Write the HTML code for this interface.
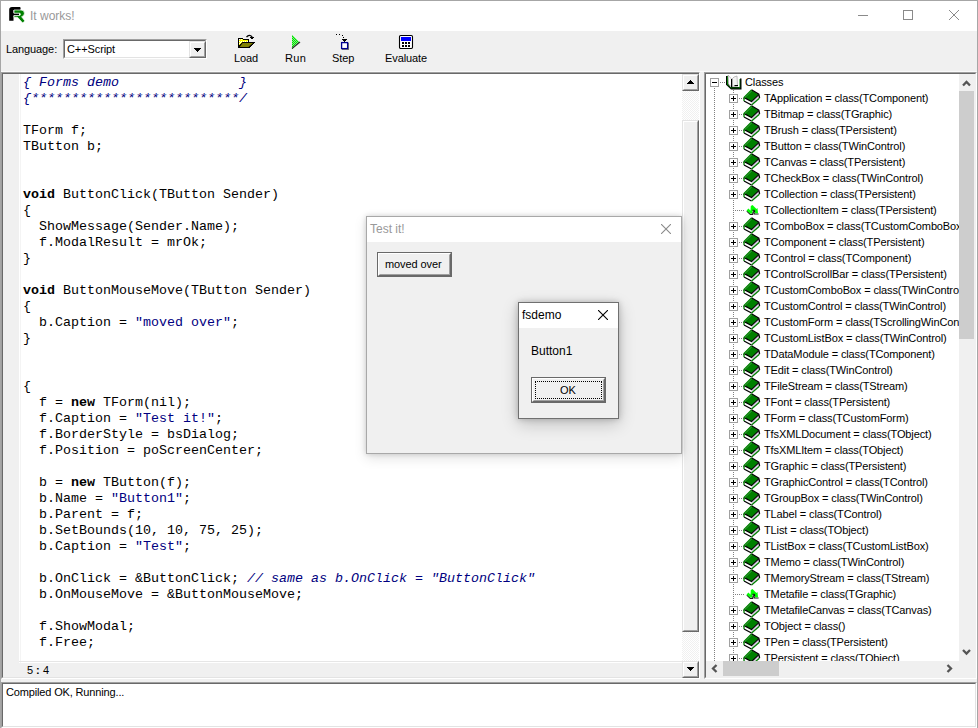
<!DOCTYPE html>
<html><head><meta charset="utf-8">
<style>
*{box-sizing:border-box;margin:0;padding:0}
html,body{width:978px;height:728px;overflow:hidden;background:#f0f0f0}
body{position:relative;font-family:"Liberation Sans",sans-serif;font-size:11px;color:#000}
.a{position:absolute}
.ui{font-family:"Liberation Sans",sans-serif;font-size:11px;white-space:pre;letter-spacing:-0.1px}
#win{left:0;top:0;width:978px;height:728px;border-left:1px solid #a6a6a6;border-top:1px solid #a6a6a6;border-right:1px solid #a6a6a6;background:#f0f0f0}
#title{left:1px;top:1px;width:976px;height:30px;background:#fff}
#code{font-family:"Liberation Mono",monospace;font-size:13.33px;line-height:16px;white-space:pre;color:#000}
#code b{font-weight:bold}
#code i{font-style:italic;color:#000080}
#code s{text-decoration:none;color:#000080}
.sb-btn{background:#f0f0f0;border-style:solid;border-width:1px;border-color:#e3e3e3 #696969 #696969 #e3e3e3}
.sb-btn>div{position:absolute;left:0;top:0;right:0;bottom:0;border-style:solid;border-width:1px;border-color:#fff #a0a0a0 #a0a0a0 #fff}
.dither{background:repeating-conic-gradient(#fff 0 25%,#f0f0f0 0 50%) 0 0/2px 2px}
.row{position:absolute;left:764px;height:16px;line-height:16px;font-size:11px;white-space:pre;letter-spacing:-0.12px}
.pb{position:absolute;left:729px;width:9px;height:9px;border:1px solid #a0a0a0;background:#fff}
.pb:before{content:"";position:absolute;left:1px;top:3px;width:5px;height:1px;background:#000}
.pb.plus:after{content:"";position:absolute;left:3px;top:1px;width:1px;height:5px;background:#000}
.hd{position:absolute;height:1px;background:repeating-linear-gradient(to right,#808080 0 1px,transparent 1px 2px)}
.vd{position:absolute;width:1px;background:repeating-linear-gradient(to bottom,#808080 0 1px,transparent 1px 2px)}
.bk{position:absolute;left:743px;width:18px;height:18px}
</style></head><body>
<svg width="0" height="0" style="position:absolute">
<defs>
<symbol id="book" viewBox="0 0 20 18">
 <polygon points="1,8.5 8.5,12.5 15.5,5.5 16.5,9 8.5,16 1,12" fill="#fff"/>
 <polygon points="8.5,12.5 15.5,5.5 16.5,9 8.5,16" fill="#d8d0e0"/>
 <polygon points="8.5,1 15.5,5.5 8.5,12.5 1,8.5" fill="#008000"/>
 <path d="M1 12L8.5 16" stroke="#000" stroke-width="1.3" fill="none"/>
 <path d="M1.2 8.6L8.5 12.6L15.8 5.6" stroke="#000" stroke-width="1.2" fill="none"/>
 <path d="M8.5 0.8L15.8 5.2L16.6 9" stroke="#000" stroke-width="1.3" fill="none"/>
 <path d="M1 12V8.5L8.5 1" stroke="#008000" stroke-width="1.3" fill="none"/>
 <path d="M8.6 16L16.4 9.2" stroke="#008000" stroke-width="1.2" fill="none"/>
 <path d="M2.2 8.4L8.4 2.2" stroke="#9ac09a" stroke-width="0.8" stroke-dasharray="0.8 0.7" fill="none"/>
</symbol>
<symbol id="openbook" viewBox="0 0 24 20">
 <path d="M4 4H6.5V12L8.5 15H18V6.5H19.5V17.5H9L4 12.8Z" fill="#000"/>
 <path d="M5 4.2H6V12.3L8.3 15.6H17.5V7H18.2V16.2H8.6L5 12.5Z" fill="#008000"/>
 <polygon points="6,3 9.5,7 9.5,15 6.5,12" fill="#fff" stroke="#999" stroke-width="0.6"/>
 <polygon points="10,7 12,5 15,4 15.5,13.5 10,14.5" fill="#f4f4f4" stroke="#999" stroke-width="0.6"/>
 <rect x="9" y="7" width="1.2" height="8" fill="#000"/>
 <rect x="12.5" y="13" width="3.5" height="1.2" fill="#000"/>
</symbol>
<symbol id="leaf" viewBox="0 0 16 16">
 <path d="M2.8 9.2L6.3 12.4H8.6L9 10L10.2 9.6V12H14.6" stroke="#000" stroke-width="1.1" fill="none" opacity="0.9"/>
 <polygon points="2.5,8.5 4.5,6.5 6.5,8.8 6.8,4 8.5,3 12.5,7 13.5,6 14,11.2 10.8,11.2 10.5,8.5 8.5,8.5 8.2,11.5 6,11.5" fill="#00ff00"/>
 <path d="M8.4 8.3H10.6V10" stroke="#000" stroke-width="1" fill="none"/>
</symbol>
</defs></svg>
<div id="win" class="a"></div>
<div id="title" class="a"></div>
<!-- app icon -->
<svg class="a" style="left:6px;top:4px" width="22" height="22" viewBox="0 0 22 22">
 <path d="M3.2 16.7V5.8Q3.2 3 6 3H14Q14.6 3 14.6 4.5Q14.6 6 14 6H7.5V9.2H13V11.6H7.5V16.7Z" fill="#000"/>
 <path d="M8 6H15Q18.4 6 18.4 9.3Q18.4 12.2 15.6 12.7L18.6 16.6Q18.6 18.7 16.4 18.7L11.4 13.2H8V11.5H13.4Q14.4 11.5 14.4 10.3Q14.4 9.2 13.4 9.2H8Z" fill="#008000" stroke="#fff" stroke-width="0.7"/>
</svg>
<div class="a ui" style="left:30px;top:9px;font-size:12px;color:#999;letter-spacing:0">It works!</div>
<!-- caption buttons -->
<div class="a" style="left:858px;top:15px;width:10px;height:1px;background:#8a8a8a"></div>
<div class="a" style="left:903px;top:10px;width:10px;height:10px;border:1px solid #8a8a8a"></div>
<svg class="a" style="left:949px;top:10px" width="10" height="10"><path d="M0 0L10 10M10 0L0 10" stroke="#8a8a8a" stroke-width="1"/></svg>

<!-- toolbar -->
<div class="a" style="left:1px;top:71px;width:976px;height:1px;background:#fafafa"></div>
<div class="a ui" style="left:6px;top:43px">Language:</div>
<div class="a" style="left:63px;top:39px;width:144px;height:20px;border-style:solid;border-width:1px;border-color:#a0a0a0 #fff #fff #a0a0a0"></div>
<div class="a" style="left:64px;top:40px;width:142px;height:18px;border-style:solid;border-width:1px;border-color:#696969 #e3e3e3 #e3e3e3 #696969;background:#fff"></div>
<div class="a ui" style="left:67px;top:43px">C++Script</div>
<div class="a sb-btn" style="left:189px;top:41px;width:17px;height:17px"><div></div></div>
<svg class="a" style="left:194px;top:48px" width="8" height="5" shape-rendering="crispEdges"><path d="M0 0H7V1H6V2H5V3H4V4H3V3H2V2H1V1H0Z" fill="#000"/></svg>

<!-- Load icon -->
<svg class="a" style="left:238px;top:34px" width="18" height="16" shape-rendering="crispEdges">
 <defs><pattern id="yd" width="2" height="2" patternUnits="userSpaceOnUse"><rect width="2" height="2" fill="#ffff00"/><rect width="1" height="1" fill="#fff"/><rect x="1" y="1" width="1" height="1" fill="#fff"/></pattern></defs>
 <path d="M0 4H4L5 5H11V8H17L11 14H0Z" fill="#000"/>
 <path d="M1 5H4L5 6H10V8H4L1 12Z" fill="url(#yd)"/>
 <rect x="1" y="6" width="9" height="1" fill="#ffff00"/>
 <path d="M4.6 9H15L10.4 13H1.6Z" fill="#808000" shape-rendering="auto"/>
 <path d="M8.5 3.2Q11.2 -0.2 14.2 3" stroke="#000" stroke-width="1.3" fill="none" shape-rendering="auto"/>
 <path d="M12 3H16V4H15V5H13V4H12Z" fill="#000"/>
</svg>
<div class="a ui" style="left:234px;top:52px">Load</div>
<!-- Run icon -->
<svg class="a" style="left:291px;top:35px" width="10" height="15" shape-rendering="crispEdges">
 <defs><pattern id="dg" width="2" height="2" patternUnits="userSpaceOnUse"><rect width="2" height="2" fill="#80f080"/><rect width="1" height="1" fill="#00e000"/><rect x="1" y="1" width="1" height="1" fill="#00e000"/></pattern></defs>
 <path d="M1 0L9 7L1 14Z" fill="url(#dg)"/>
 <path d="M1 13.5L9 7" stroke="#333" stroke-width="1.2" shape-rendering="auto"/>
</svg>
<div class="a ui" style="left:285px;top:52px;letter-spacing:0.4px">Run</div>
<!-- Step icon -->
<svg class="a" style="left:335px;top:33px" width="16" height="17" shape-rendering="crispEdges">
 <rect x="1" y="1" width="1" height="1" fill="#000"/><rect x="4" y="1" width="1" height="1" fill="#000"/><rect x="7" y="2" width="1" height="1" fill="#000"/><rect x="8" y="4" width="1" height="1" fill="#000"/>
 <path d="M7 6H12V7H11V8H10V9H9V8H8V7H7Z" fill="#000"/>
 <rect x="7" y="10" width="7" height="7" fill="#808070"/>
 <rect x="6.6" y="9.6" width="6" height="6" fill="#fff" stroke="#000090" stroke-width="1.3" shape-rendering="auto"/>
</svg>
<div class="a ui" style="left:332px;top:52px">Step</div>
<!-- Evaluate icon -->
<svg class="a" style="left:398px;top:34px" width="16" height="16" shape-rendering="crispEdges">
 <rect x="1.5" y="1.5" width="13" height="13" rx="1.2" fill="#fff" stroke="#000" stroke-width="1.1" shape-rendering="auto"/>
 <rect x="3" y="3" width="10" height="4" fill="#0000ff"/>
 <rect x="4" y="8" width="2" height="2" fill="#000"/><rect x="7" y="8" width="2" height="2" fill="#000"/><rect x="10" y="8" width="2" height="2" fill="#000"/>
 <rect x="4" y="11" width="2" height="2" fill="#000"/><rect x="7" y="11" width="2" height="2" fill="#000"/><rect x="10" y="11" width="2" height="2" fill="#000"/>
</svg>
<div class="a ui" style="left:385px;top:52px">Evaluate</div>

<!-- EDITOR FRAME -->
<div class="a" style="left:1px;top:72px;width:699px;height:607px;border-style:solid;border-width:1px;border-color:#a0a0a0 #fff #fff #a0a0a0"></div>
<div class="a" style="left:2px;top:73px;width:697px;height:605px;border-style:solid;border-width:1px 0 1px 1px;border-color:#696969 #e3e3e3 #e3e3e3 #696969;background:#f0f0f0"></div>
<div class="a" style="left:19px;top:74px;width:663px;height:589px;background:#fff;box-shadow:inset 1px 0 0 #fff,inset 2px 0 0 #f4f4f4"></div>
<div class="a" style="left:19px;top:661px;width:663px;height:1px;background:#e6e6e6"></div>
<div id="code" class="a" style="left:23px;top:75px"><i>{ Forms demo               }</i>
<i>{**************************/</i>

TForm f;
TButton b;


<b>void</b> ButtonClick(TButton Sender)
{
  ShowMessage(Sender.Name);
  f.ModalResult = mrOk;
}

<b>void</b> ButtonMouseMove(TButton Sender)
{
  b.Caption = <s>"moved over"</s>;
}


{
  f = <b>new</b> TForm(nil);
  f.Caption = <s>"Test it!"</s>;
  f.BorderStyle = bsDialog;
  f.Position = poScreenCenter;

  b = <b>new</b> TButton(f);
  b.Name = <s>"Button1"</s>;
  b.Parent = f;
  b.SetBounds(10, 10, 75, 25);
  b.Caption = <s>"Test"</s>;

  b.OnClick = &amp;ButtonClick; <i>// same as b.OnClick = "ButtonClick"</i>
  b.OnMouseMove = &amp;ButtonMouseMove;

  f.ShowModal;
  f.Free;</div>
<div class="a ui" style="left:27px;top:664px">5</div><div class="a ui" style="left:36px;top:664px;font-weight:bold">:</div><div class="a ui" style="left:43px;top:664px">4</div>
<!-- editor vscroll -->
<div class="a dither" style="left:682px;top:74px;width:17px;height:604px"></div>
<div class="a sb-btn" style="left:682px;top:74px;width:17px;height:17px"><div></div></div>
<svg class="a" style="left:687px;top:80px" width="8" height="5" shape-rendering="crispEdges"><path d="M3 0H4V1H5V2H6V3H7V4H0V3H1V2H2V1H3Z" fill="#000"/></svg>
<div class="a sb-btn" style="left:682px;top:120px;width:17px;height:512px"><div></div></div>
<div class="a sb-btn" style="left:682px;top:661px;width:17px;height:17px"><div></div></div>
<svg class="a" style="left:687px;top:667px" width="8" height="5" shape-rendering="crispEdges"><path d="M0 0H7V1H6V2H5V3H4V4H3V3H2V2H1V1H0Z" fill="#000"/></svg>

<!-- TREE FRAME -->
<div class="a" style="left:704px;top:72px;width:273px;height:607px;border-style:solid;border-width:1px;border-color:#a0a0a0 #fff #fff #a0a0a0"></div>
<div class="a" style="left:705px;top:73px;width:271px;height:605px;border-style:solid;border-width:1px;border-color:#696969 #e3e3e3 #e3e3e3 #696969;background:#fff;overflow:hidden" id="tree"></div>
<div class="a" style="left:706px;top:74px;width:253px;height:587px;overflow:hidden;background:#fff">
<div class="pb" style="left:4px;top:4px"></div>
<div class="hd" style="left:14px;top:8px;width:6px"></div>
<svg class="a" style="left:16px;top:-2px" width="24" height="20"><use href="#openbook"/></svg>
<div class="row" style="left:39px;top:0px">Classes</div>
<div class="vd" style="left:8px;top:14px;height:580px"></div>
<div class="vd" style="left:27px;top:16px;height:580px"></div>
<div class="pb plus" style="left:23px;top:20px"></div>
<div class="hd" style="left:33px;top:24px;width:5px"></div>
<svg class="a" style="left:37px;top:15px" width="20" height="18"><use href="#book"/></svg>
<div class="row" style="left:58px;top:16px">TApplication = class(TComponent)</div>
<div class="pb plus" style="left:23px;top:36px"></div>
<div class="hd" style="left:33px;top:40px;width:5px"></div>
<svg class="a" style="left:37px;top:31px" width="20" height="18"><use href="#book"/></svg>
<div class="row" style="left:58px;top:32px">TBitmap = class(TGraphic)</div>
<div class="pb plus" style="left:23px;top:52px"></div>
<div class="hd" style="left:33px;top:56px;width:5px"></div>
<svg class="a" style="left:37px;top:47px" width="20" height="18"><use href="#book"/></svg>
<div class="row" style="left:58px;top:48px">TBrush = class(TPersistent)</div>
<div class="pb plus" style="left:23px;top:68px"></div>
<div class="hd" style="left:33px;top:72px;width:5px"></div>
<svg class="a" style="left:37px;top:63px" width="20" height="18"><use href="#book"/></svg>
<div class="row" style="left:58px;top:64px">TButton = class(TWinControl)</div>
<div class="pb plus" style="left:23px;top:84px"></div>
<div class="hd" style="left:33px;top:88px;width:5px"></div>
<svg class="a" style="left:37px;top:79px" width="20" height="18"><use href="#book"/></svg>
<div class="row" style="left:58px;top:80px">TCanvas = class(TPersistent)</div>
<div class="pb plus" style="left:23px;top:100px"></div>
<div class="hd" style="left:33px;top:104px;width:5px"></div>
<svg class="a" style="left:37px;top:95px" width="20" height="18"><use href="#book"/></svg>
<div class="row" style="left:58px;top:96px">TCheckBox = class(TWinControl)</div>
<div class="pb plus" style="left:23px;top:116px"></div>
<div class="hd" style="left:33px;top:120px;width:5px"></div>
<svg class="a" style="left:37px;top:111px" width="20" height="18"><use href="#book"/></svg>
<div class="row" style="left:58px;top:112px">TCollection = class(TPersistent)</div>
<div class="hd" style="left:29px;top:136px;width:10px"></div>
<svg class="a" style="left:38px;top:128px" width="16" height="16"><use href="#leaf"/></svg>
<div class="row" style="left:58px;top:128px">TCollectionItem = class(TPersistent)</div>
<div class="pb plus" style="left:23px;top:148px"></div>
<div class="hd" style="left:33px;top:152px;width:5px"></div>
<svg class="a" style="left:37px;top:143px" width="20" height="18"><use href="#book"/></svg>
<div class="row" style="left:58px;top:144px">TComboBox = class(TCustomComboBox)</div>
<div class="pb plus" style="left:23px;top:164px"></div>
<div class="hd" style="left:33px;top:168px;width:5px"></div>
<svg class="a" style="left:37px;top:159px" width="20" height="18"><use href="#book"/></svg>
<div class="row" style="left:58px;top:160px">TComponent = class(TPersistent)</div>
<div class="pb plus" style="left:23px;top:180px"></div>
<div class="hd" style="left:33px;top:184px;width:5px"></div>
<svg class="a" style="left:37px;top:175px" width="20" height="18"><use href="#book"/></svg>
<div class="row" style="left:58px;top:176px">TControl = class(TComponent)</div>
<div class="pb plus" style="left:23px;top:196px"></div>
<div class="hd" style="left:33px;top:200px;width:5px"></div>
<svg class="a" style="left:37px;top:191px" width="20" height="18"><use href="#book"/></svg>
<div class="row" style="left:58px;top:192px">TControlScrollBar = class(TPersistent)</div>
<div class="pb plus" style="left:23px;top:212px"></div>
<div class="hd" style="left:33px;top:216px;width:5px"></div>
<svg class="a" style="left:37px;top:207px" width="20" height="18"><use href="#book"/></svg>
<div class="row" style="left:58px;top:208px">TCustomComboBox = class(TWinControl)</div>
<div class="pb plus" style="left:23px;top:228px"></div>
<div class="hd" style="left:33px;top:232px;width:5px"></div>
<svg class="a" style="left:37px;top:223px" width="20" height="18"><use href="#book"/></svg>
<div class="row" style="left:58px;top:224px">TCustomControl = class(TWinControl)</div>
<div class="pb plus" style="left:23px;top:244px"></div>
<div class="hd" style="left:33px;top:248px;width:5px"></div>
<svg class="a" style="left:37px;top:239px" width="20" height="18"><use href="#book"/></svg>
<div class="row" style="left:58px;top:240px">TCustomForm = class(TScrollingWinControl)</div>
<div class="pb plus" style="left:23px;top:260px"></div>
<div class="hd" style="left:33px;top:264px;width:5px"></div>
<svg class="a" style="left:37px;top:255px" width="20" height="18"><use href="#book"/></svg>
<div class="row" style="left:58px;top:256px">TCustomListBox = class(TWinControl)</div>
<div class="pb plus" style="left:23px;top:276px"></div>
<div class="hd" style="left:33px;top:280px;width:5px"></div>
<svg class="a" style="left:37px;top:271px" width="20" height="18"><use href="#book"/></svg>
<div class="row" style="left:58px;top:272px">TDataModule = class(TComponent)</div>
<div class="pb plus" style="left:23px;top:292px"></div>
<div class="hd" style="left:33px;top:296px;width:5px"></div>
<svg class="a" style="left:37px;top:287px" width="20" height="18"><use href="#book"/></svg>
<div class="row" style="left:58px;top:288px">TEdit = class(TWinControl)</div>
<div class="pb plus" style="left:23px;top:308px"></div>
<div class="hd" style="left:33px;top:312px;width:5px"></div>
<svg class="a" style="left:37px;top:303px" width="20" height="18"><use href="#book"/></svg>
<div class="row" style="left:58px;top:304px">TFileStream = class(TStream)</div>
<div class="pb plus" style="left:23px;top:324px"></div>
<div class="hd" style="left:33px;top:328px;width:5px"></div>
<svg class="a" style="left:37px;top:319px" width="20" height="18"><use href="#book"/></svg>
<div class="row" style="left:58px;top:320px">TFont = class(TPersistent)</div>
<div class="pb plus" style="left:23px;top:340px"></div>
<div class="hd" style="left:33px;top:344px;width:5px"></div>
<svg class="a" style="left:37px;top:335px" width="20" height="18"><use href="#book"/></svg>
<div class="row" style="left:58px;top:336px">TForm = class(TCustomForm)</div>
<div class="pb plus" style="left:23px;top:356px"></div>
<div class="hd" style="left:33px;top:360px;width:5px"></div>
<svg class="a" style="left:37px;top:351px" width="20" height="18"><use href="#book"/></svg>
<div class="row" style="left:58px;top:352px">TfsXMLDocument = class(TObject)</div>
<div class="pb plus" style="left:23px;top:372px"></div>
<div class="hd" style="left:33px;top:376px;width:5px"></div>
<svg class="a" style="left:37px;top:367px" width="20" height="18"><use href="#book"/></svg>
<div class="row" style="left:58px;top:368px">TfsXMLItem = class(TObject)</div>
<div class="pb plus" style="left:23px;top:388px"></div>
<div class="hd" style="left:33px;top:392px;width:5px"></div>
<svg class="a" style="left:37px;top:383px" width="20" height="18"><use href="#book"/></svg>
<div class="row" style="left:58px;top:384px">TGraphic = class(TPersistent)</div>
<div class="pb plus" style="left:23px;top:404px"></div>
<div class="hd" style="left:33px;top:408px;width:5px"></div>
<svg class="a" style="left:37px;top:399px" width="20" height="18"><use href="#book"/></svg>
<div class="row" style="left:58px;top:400px">TGraphicControl = class(TControl)</div>
<div class="pb plus" style="left:23px;top:420px"></div>
<div class="hd" style="left:33px;top:424px;width:5px"></div>
<svg class="a" style="left:37px;top:415px" width="20" height="18"><use href="#book"/></svg>
<div class="row" style="left:58px;top:416px">TGroupBox = class(TWinControl)</div>
<div class="pb plus" style="left:23px;top:436px"></div>
<div class="hd" style="left:33px;top:440px;width:5px"></div>
<svg class="a" style="left:37px;top:431px" width="20" height="18"><use href="#book"/></svg>
<div class="row" style="left:58px;top:432px">TLabel = class(TControl)</div>
<div class="pb plus" style="left:23px;top:452px"></div>
<div class="hd" style="left:33px;top:456px;width:5px"></div>
<svg class="a" style="left:37px;top:447px" width="20" height="18"><use href="#book"/></svg>
<div class="row" style="left:58px;top:448px">TList = class(TObject)</div>
<div class="pb plus" style="left:23px;top:468px"></div>
<div class="hd" style="left:33px;top:472px;width:5px"></div>
<svg class="a" style="left:37px;top:463px" width="20" height="18"><use href="#book"/></svg>
<div class="row" style="left:58px;top:464px">TListBox = class(TCustomListBox)</div>
<div class="pb plus" style="left:23px;top:484px"></div>
<div class="hd" style="left:33px;top:488px;width:5px"></div>
<svg class="a" style="left:37px;top:479px" width="20" height="18"><use href="#book"/></svg>
<div class="row" style="left:58px;top:480px">TMemo = class(TWinControl)</div>
<div class="pb plus" style="left:23px;top:500px"></div>
<div class="hd" style="left:33px;top:504px;width:5px"></div>
<svg class="a" style="left:37px;top:495px" width="20" height="18"><use href="#book"/></svg>
<div class="row" style="left:58px;top:496px">TMemoryStream = class(TStream)</div>
<div class="hd" style="left:29px;top:520px;width:10px"></div>
<svg class="a" style="left:38px;top:512px" width="16" height="16"><use href="#leaf"/></svg>
<div class="row" style="left:58px;top:512px">TMetafile = class(TGraphic)</div>
<div class="pb plus" style="left:23px;top:532px"></div>
<div class="hd" style="left:33px;top:536px;width:5px"></div>
<svg class="a" style="left:37px;top:527px" width="20" height="18"><use href="#book"/></svg>
<div class="row" style="left:58px;top:528px">TMetafileCanvas = class(TCanvas)</div>
<div class="pb plus" style="left:23px;top:548px"></div>
<div class="hd" style="left:33px;top:552px;width:5px"></div>
<svg class="a" style="left:37px;top:543px" width="20" height="18"><use href="#book"/></svg>
<div class="row" style="left:58px;top:544px">TObject = class()</div>
<div class="pb plus" style="left:23px;top:564px"></div>
<div class="hd" style="left:33px;top:568px;width:5px"></div>
<svg class="a" style="left:37px;top:559px" width="20" height="18"><use href="#book"/></svg>
<div class="row" style="left:58px;top:560px">TPen = class(TPersistent)</div>
<div class="pb plus" style="left:23px;top:580px"></div>
<div class="hd" style="left:33px;top:584px;width:5px"></div>
<svg class="a" style="left:37px;top:575px" width="20" height="18"><use href="#book"/></svg>
<div class="row" style="left:58px;top:576px">TPersistent = class(TObject)</div>
</div>


<!-- tree scrollbars -->
<div class="a" style="left:959px;top:74px;width:17px;height:604px;background:#f0f0f0"></div>
<div class="a" style="left:706px;top:661px;width:253px;height:17px;background:#f0f0f0"></div>
<div class="a" style="left:959px;top:91px;width:15px;height:248px;background:#cdcdcd"></div>
<div class="a" style="left:723px;top:661px;width:56px;height:15px;background:#cdcdcd"></div>
<svg class="a" style="left:959px;top:74px" width="17" height="17"><path d="M4 11.5L7.5 8L11 11.5" stroke="#555" stroke-width="2.3" fill="none"/></svg>
<svg class="a" style="left:959px;top:643px" width="17" height="17"><path d="M4 7L7.5 10.5L11 7" stroke="#555" stroke-width="2.3" fill="none"/></svg>
<svg class="a" style="left:706px;top:661px" width="17" height="17"><path d="M10.5 4L7 7.5L10.5 11" stroke="#555" stroke-width="2.3" fill="none"/></svg>
<svg class="a" style="left:941px;top:661px" width="17" height="17"><path d="M6.5 4L10 7.5L6.5 11" stroke="#555" stroke-width="2.3" fill="none"/></svg>

<!-- MESSAGE PANEL -->
<div class="a" style="left:1px;top:682px;width:976px;height:46px;border-style:solid;border-width:1px;border-color:#a0a0a0 #fff #fff #a0a0a0"></div>
<div class="a" style="left:2px;top:683px;width:974px;height:44px;border-style:solid;border-width:1px;border-color:#696969 #e3e3e3 #e3e3e3 #696969;background:#fff"></div>
<div class="a ui" style="left:6px;top:686px;letter-spacing:-0.15px">Compiled OK, Running...</div>


<!-- DIALOG Test it! -->
<div class="a" style="left:366px;top:216px;width:316px;height:238px;background:#f0f0f0;border:1px solid #a8a8a8;box-shadow:0 0 5px rgba(0,0,0,0.16),0 4px 12px rgba(0,0,0,0.12)"></div>
<div class="a" style="left:367px;top:217px;width:314px;height:25px;background:#fff"></div>
<div class="a ui" style="left:370px;top:222px;font-size:12px;color:#999;letter-spacing:0">Test it!</div>
<svg class="a" style="left:661px;top:224px" width="10" height="10"><path d="M0 0L10 10M10 0L0 10" stroke="#8a8a8a" stroke-width="1.1"/></svg>
<div class="a" style="left:377px;top:252px;width:75px;height:25px;border:1px solid #696969;background:#f0f0f0"></div>
<div class="a" style="left:378px;top:253px;width:73px;height:23px;border-style:solid;border-width:1px;border-color:#fff #696969 #696969 #fff"></div>
<div class="a" style="left:379px;top:254px;width:71px;height:21px;border-style:solid;border-width:1px;border-color:#f0f0f0 #a0a0a0 #a0a0a0 #f0f0f0"></div>
<div class="a ui" style="left:385px;top:258px">moved over</div>

<!-- DIALOG fsdemo -->
<div class="a" style="left:518px;top:302px;width:101px;height:117px;background:#f0f0f0;border:1px solid #707070;box-shadow:0 0 6px rgba(0,0,0,0.22),0 5px 16px rgba(0,0,0,0.2)"></div>
<div class="a" style="left:519px;top:303px;width:99px;height:25px;background:#fff"></div>
<div class="a ui" style="left:522px;top:308px;font-size:12px;letter-spacing:0">fsdemo</div>
<svg class="a" style="left:598px;top:310px" width="10" height="10"><path d="M0 0L10 10M10 0L0 10" stroke="#000" stroke-width="1.1"/></svg>
<div class="a ui" style="left:531px;top:344px;font-size:12px;letter-spacing:0">Button1</div>
<div class="a" style="left:531px;top:377px;width:75px;height:26px;border:1px solid #696969;background:#f0f0f0"></div>
<div class="a" style="left:532px;top:378px;width:73px;height:24px;border-style:solid;border-width:1px;border-color:#fff #696969 #696969 #fff"></div>
<div class="a" style="left:533px;top:379px;width:71px;height:22px;border-style:solid;border-width:1px;border-color:#f0f0f0 #a0a0a0 #a0a0a0 #f0f0f0"></div>
<div class="a" style="left:535px;top:381px;width:67px;height:18px;border:1px dotted #000"></div>
<div class="a ui" style="left:560px;top:384px">OK</div>
</body></html>
